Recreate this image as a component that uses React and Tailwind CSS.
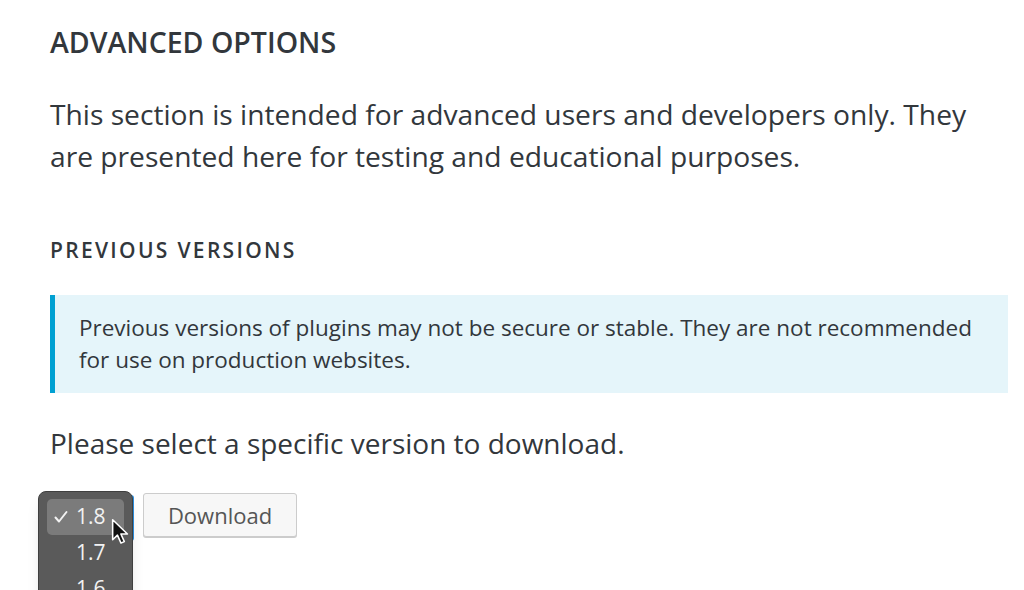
export default function App() {
  const font = { fontFamily: '"Open Sans", "Noto Sans", sans-serif' };
  return (
    <div className="h-[590px] w-[1024px] overflow-hidden bg-white text-[#32373c]" style={font}>
      <div className="pl-[50px] pr-4 pt-[23px]">
        <h2 className="text-[28.5px] font-semibold leading-[38px]">ADVANCED OPTIONS</h2>
        <p className="mt-[32px] w-[940px] text-[28.2px] leading-[42px]">
          This section is intended for advanced users and developers only. They are presented here for testing and educational purposes.
        </p>
        <h3 className="mt-[59px] text-[21px] font-semibold tracking-[0.11em] leading-[28px]">PREVIOUS VERSIONS</h3>
        <div className="mt-[31px] w-[958px] border-l-[5px] border-[#00a0d2] bg-[#e5f5fa] py-[17px] pl-[24px] pr-4">
          <p className="text-[22.5px] leading-[32px]">
            Previous versions of plugins may not be secure or stable. They are not recommended for use on production websites.
          </p>
        </div>
        <p className="mt-[30px] text-[28px] leading-[40px]">Please select a specific version to download.</p>
        <div className="relative mt-[28px] flex items-start">
          <div className="relative ml-[-12px] h-[110px] w-[95px]">
            <div className="absolute right-[-1px] top-[4px] h-[46px] w-[3px] rounded-r bg-[#2b8fe0]" />
            <div className="absolute inset-0 rounded-[8px] border border-[#3f3f3f] bg-[#5a5a5a] px-[8px] pt-[7px] text-[21px] text-[#f2f2f2] shadow-lg">
              <div className="flex h-[36px] items-center rounded-[5px] bg-[#7b7b7b] pl-[7px]">
                <svg className="mr-[8px]" width="14" height="14" viewBox="0 0 14 14">
                  <path d="M1.5 7.5 L5 11.5 L12.5 2" fill="none" stroke="#f2f2f2" strokeWidth="2" strokeLinecap="round" strokeLinejoin="round" />
                </svg>
                <span>1.8</span>
              </div>
              <div className="flex h-[36px] items-center pl-[29px]">1.7</div>
              <div className="flex h-[36px] items-center pl-[29px]">1.6</div>
            </div>
            <svg className="absolute left-[73px] top-[27px]" width="20" height="29" viewBox="0 0 18 26">
              <path d="M1.5 1.5 L1.5 19.5 L5.8 15.4 L9 22.5 L12 21.2 L8.9 14.3 L14.8 14.3 Z" fill="#111" stroke="#fff" strokeWidth="1.4" strokeLinejoin="round" />
            </svg>
          </div>
          <button className="ml-[10px] mt-[2px] h-[44px] w-[154px] rounded-[3px] border border-[#cccccc] bg-[#f7f7f7] text-[22px] text-[#555] shadow-[0_1px_0_#ccc]">
            Download
          </button>
        </div>
      </div>
    </div>
  );
}
